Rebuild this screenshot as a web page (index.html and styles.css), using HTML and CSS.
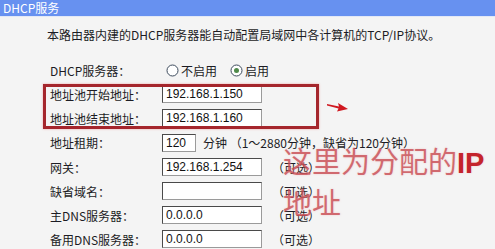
FILE: index.html
```html
<!doctype html>
<html lang="zh-CN">

<head>
  <meta charset="UTF-8" />
  <title>DHCP服务</title>
  <link rel="stylesheet" href="styles.css">
</head>

<body>
  <div class="page">
    <div class="title-bar">DHCP服务</div>

    <p class="intro">本路由器内建的DHCP服务器能自动配置局域网中各计算机的TCP/IP协议。</p>

    <div class="form">
      <div class="row">
        <label>DHCP服务器：</label>
        <div class="field">
          <span class="radio">
            <svg width="13" height="13" viewBox="0 0 13 13"><circle cx="6.5" cy="6.5" r="5.5" fill="#fff" stroke="#3c4a5c" /></svg>
            不启用
          </span>
          <span class="radio">
            <svg width="13" height="13" viewBox="0 0 13 13"><circle cx="6.5" cy="6.5" r="5.5" fill="#fff" stroke="#3c4a5c" /><circle cx="6.5" cy="6.5" r="2.5" fill="#4f8a4a" /></svg>
            启用
          </span>
        </div>
      </div>
      <div class="row">
        <label>地址池开始地址：</label>
        <div class="field"><input class="ip" value="192.168.1.150"></div>
      </div>
      <div class="row">
        <label>地址池结束地址：</label>
        <div class="field"><input class="ip" value="192.168.1.160"></div>
      </div>
      <div class="row lease">
        <label>地址租期：</label>
        <div class="field">
          <input class="short" value="120">
          <span class="note">分钟 （1～2880分钟，缺省为120分钟）</span>
        </div>
      </div>
      <div class="row">
        <label>网关：</label>
        <div class="field"><input class="ip" value="192.168.1.254"><span class="hint">（可选）</span></div>
      </div>
      <div class="row">
        <label>缺省域名：</label>
        <div class="field"><input class="ip" value=""><span class="hint">（可选）</span></div>
      </div>
      <div class="row">
        <label>主DNS服务器：</label>
        <div class="field"><input class="ip" value="0.0.0.0"><span class="hint">（可选）</span></div>
      </div>
      <div class="row">
        <label>备用DNS服务器：</label>
        <div class="field"><input class="ip" value="0.0.0.0"><span class="hint">（可选）</span></div>
      </div>
    </div>

    <!-- annotation drawn over the screenshot -->
    <div class="mark-box"></div>
    <svg class="mark-arrow" width="24" height="12" viewBox="0 0 24 12">
      <path d="M1 3 L13 5.5 L12 2 L22 8 L11 10.5 L12.5 7.5 L1 4.5 Z" fill="#d01820" />
    </svg>
    <div class="mark-text">这里为分配的<b>IP</b><br>地址</div>
  </div>
</body>

</html>
```

FILE: styles.css
```css
* {
  margin: 0;
  padding: 0;
  box-sizing: border-box;
}

body {
  background: #f4f4f4;
  font-family: "Noto Sans CJK SC", "Liberation Sans", sans-serif;
  font-size: 12px;
  color: #1c1c24;
  overflow: hidden;
}

.page {
  position: relative;
  width: 495px;
  height: 249px;
}

.title-bar {
  height: 17px;
  line-height: 16px;
  padding-left: 3px;
  background: #6791f0;
  border-bottom: 1px solid #e2e8f6;
  color: #fff;
  font-size: 12px;
}

.intro {
  padding: 10px 0 0 47px;
  line-height: 16px;
}

.form {
  margin-top: 15px;
  padding-left: 50px;
}

.row {
  display: grid;
  grid-template-columns: 112px auto;
  align-items: center;
  height: 24px;
}

.row.lease {
  height: 25px;
}

.field {
  display: flex;
  align-items: center;
}

.radio {
  display: flex;
  align-items: center;
  gap: 2px;
  margin-left: 4px;
  margin-right: 9px;
}

.radio svg {
  display: block;
}

input {
  height: 18px;
  border: 1px solid #4a4a4a;
  border-right-color: #9a9a9a;
  border-bottom-color: #9a9a9a;
  background: #fff;
  font-family: "Liberation Sans", sans-serif;
  font-size: 12px;
  color: #111;
  padding: 0 3px;
  outline: none;
}

input.ip {
  width: 100px;
}

input.short {
  width: 34px;
}

.note {
  margin-left: 7px;
}

.hint {
  margin-left: 10px;
}

.mark-box {
  position: absolute;
  left: 43px;
  top: 84px;
  width: 276px;
  height: 45px;
  border: 3px solid #a5262c;
  box-shadow: 0 0 2px rgba(240, 110, 110, 0.6);
}

.mark-arrow {
  position: absolute;
  left: 326px;
  top: 101px;
}

.mark-text {
  position: absolute;
  left: 283px;
  top: 141px;
  font-size: 29px;
  line-height: 38px;
  color: rgba(196, 64, 72, 0.72);
  text-shadow: 0 0 2px rgba(240, 170, 170, 0.6);
}

.mark-text b {
  color: #c4242c;
  font-family: "Liberation Sans", sans-serif;
  font-weight: 700;
}
```
